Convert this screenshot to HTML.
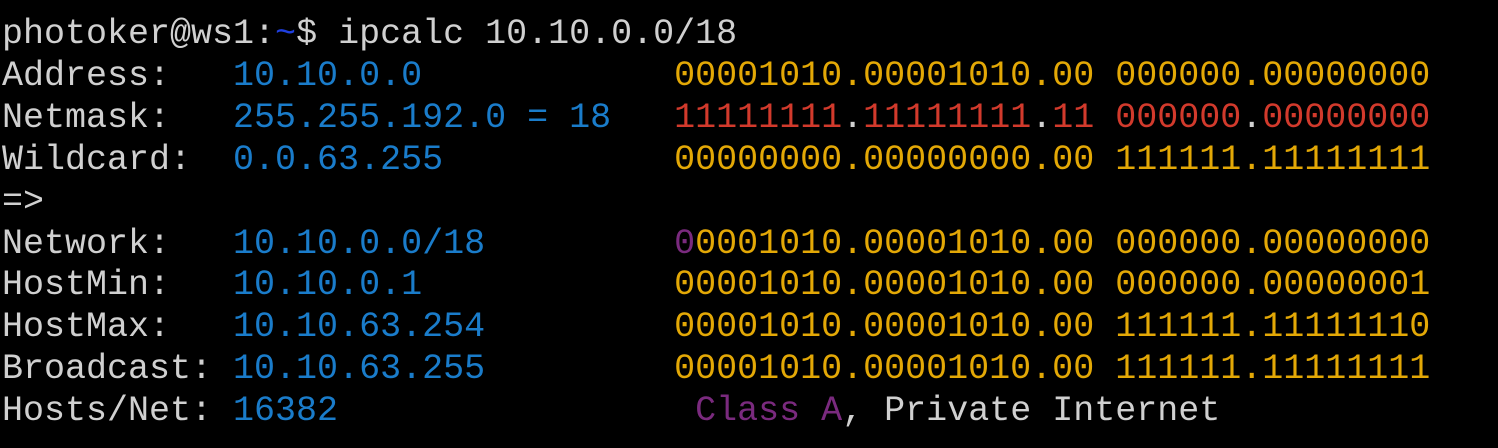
<!DOCTYPE html><html><head><style>
body{margin:0;background:#000;width:1498px;height:448px;overflow:hidden}
pre{margin:0;position:absolute;left:2px;top:14px;font-family:"Liberation Mono",monospace;font-size:35px;line-height:41.9px;color:#d0d0d0;letter-spacing:0}
.b{color:#1a7cca}.t{color:#1f3fe0}.y{color:#e3a806}.r{color:#d23a2c}.p{color:#7a2a7e}
</style></head><body><pre>photoker@ws1:<span class="t">~</span>$ ipcalc 10.10.0.0/18
Address:   <span class="b">10.10.0.0</span>            <span class="y">00001010.00001010.00 000000.00000000</span>
Netmask:   <span class="b">255.255.192.0 = 18</span>   <span class="r">11111111</span>.<span class="r">11111111</span>.<span class="r">11 000000</span>.<span class="r">00000000</span>
Wildcard:  <span class="b">0.0.63.255</span>           <span class="y">00000000.00000000.00 111111.11111111</span>
=&gt;
Network:   <span class="b">10.10.0.0/18</span>         <span class="p">0</span><span class="y">0001010.00001010.00 000000.00000000</span>
HostMin:   <span class="b">10.10.0.1</span>            <span class="y">00001010.00001010.00 000000.00000001</span>
HostMax:   <span class="b">10.10.63.254</span>         <span class="y">00001010.00001010.00 111111.11111110</span>
Broadcast: <span class="b">10.10.63.255</span>         <span class="y">00001010.00001010.00 111111.11111111</span>
Hosts/Net: <span class="b">16382</span>                 <span class="p">Class A</span>, Private Internet</pre></body></html>
